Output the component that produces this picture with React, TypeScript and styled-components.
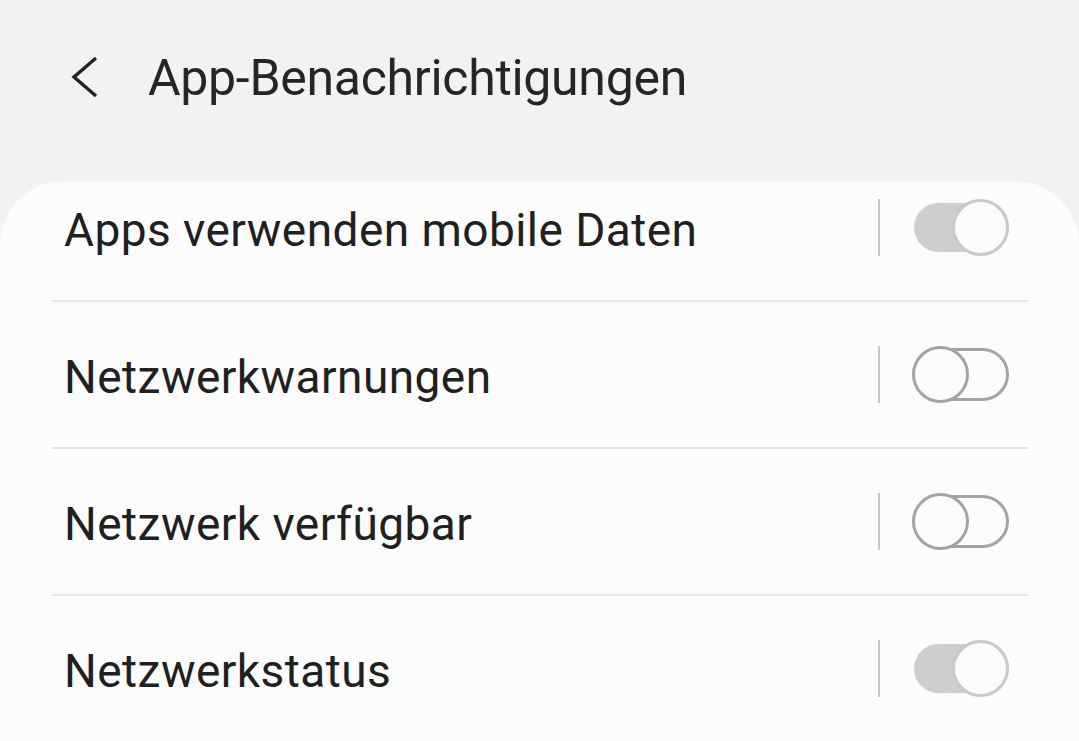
import React from 'react'
import styled, { createGlobalStyle } from 'styled-components'

const Global = createGlobalStyle`
  html, body {
    margin: 0;
    padding: 0;
    background: #f2f2f2;
    font-family: Roboto, "Noto Sans", sans-serif;
  }
`

const Screen = styled.div`
  width: 1079px;
  height: 741px;
  overflow: hidden;
  background: #f2f2f2;
  display: flex;
  flex-direction: column;
`

const Header = styled.header`
  height: 181px;
  display: flex;
  align-items: flex-start;
  padding: 47px 0 0 66px;
  box-sizing: border-box;
  gap: 46px;
`

const BackButton = styled.button`
  border: 0;
  background: none;
  padding: 0;
  margin-top: 8px;
  width: 36px;
  height: 44px;
  display: flex;
  align-items: center;
  justify-content: center;
  cursor: pointer;
`

const Title = styled.h1`
  margin: 0;
  font-size: 50px;
  font-weight: 400;
  color: #252525;
  letter-spacing: -0.3px;
  line-height: 62px;
`

const Card = styled.section`
  flex: 1;
  background: #fcfcfc;
  border-radius: 64px 64px 0 0;
  overflow: hidden;
`

const List = styled.div`
  margin-top: -26px;
  display: flex;
  flex-direction: column;
`

const Row = styled.div<{ last?: boolean }>`
  height: 145px;
  margin: 0 51px 0 52px;
  display: flex;
  align-items: center;
  border-bottom: ${({ last }) => (last ? 'none' : '2px solid #e4e4e4')};
`

const Label = styled.span`
  flex: 1;
  padding-left: 12px;
  padding-top: 4px;
  font-size: 46px;
  color: #202020;
  letter-spacing: 0.45px;
`

const Divider = styled.span`
  width: 2px;
  height: 57px;
  background: #c9c9c9;
  margin-right: 32px;
`

const Switch = styled.span<{ on: boolean }>`
  position: relative;
  width: 97px;
  height: 57px;
  margin-right: 19px;
  display: block;
`

const Track = styled.span<{ on: boolean }>`
  position: absolute;
  left: 2px;
  right: 0;
  top: ${({ on }) => (on ? '4px' : '2px')};
  bottom: ${({ on }) => (on ? '4px' : '2px')};
  border-radius: 30px;
  box-sizing: border-box;
  background: ${({ on }) => (on ? '#cecece' : 'transparent')};
  border: ${({ on }) => (on ? 'none' : '3px solid #a4a4a4')};
`

const Thumb = styled.span<{ on: boolean }>`
  position: absolute;
  top: 0;
  left: ${({ on }) => (on ? '40px' : '0')};
  width: 57px;
  height: 57px;
  border-radius: 50%;
  box-sizing: border-box;
  background: #fcfcfc;
  border: 3px solid ${({ on }) => (on ? '#c9c9c9' : '#a4a4a4')};
`

const rows = [
  { label: 'Apps verwenden mobile Daten', on: true },
  { label: 'Netzwerkwarnungen', on: false },
  { label: 'Netzwerk verfügbar', on: false },
  { label: 'Netzwerkstatus', on: true },
]

export default function App() {
  return (
    <Screen>
      <Global />
      <Header>
        <BackButton aria-label="Zurück">
          <svg width="30" height="44" viewBox="0 0 30 44">
            <path d="M27 3 L5 22 L27 41" fill="none" stroke="#222" strokeWidth="3.4" />
          </svg>
        </BackButton>
        <Title>App-Benachrichtigungen</Title>
      </Header>
      <Card>
        <List>
          {rows.map((r, i) => (
            <Row key={r.label} last={i === rows.length - 1}>
              <Label>{r.label}</Label>
              <Divider />
              <Switch on={r.on}>
                <Track on={r.on} />
                <Thumb on={r.on} />
              </Switch>
            </Row>
          ))}
        </List>
      </Card>
    </Screen>
  )
}
